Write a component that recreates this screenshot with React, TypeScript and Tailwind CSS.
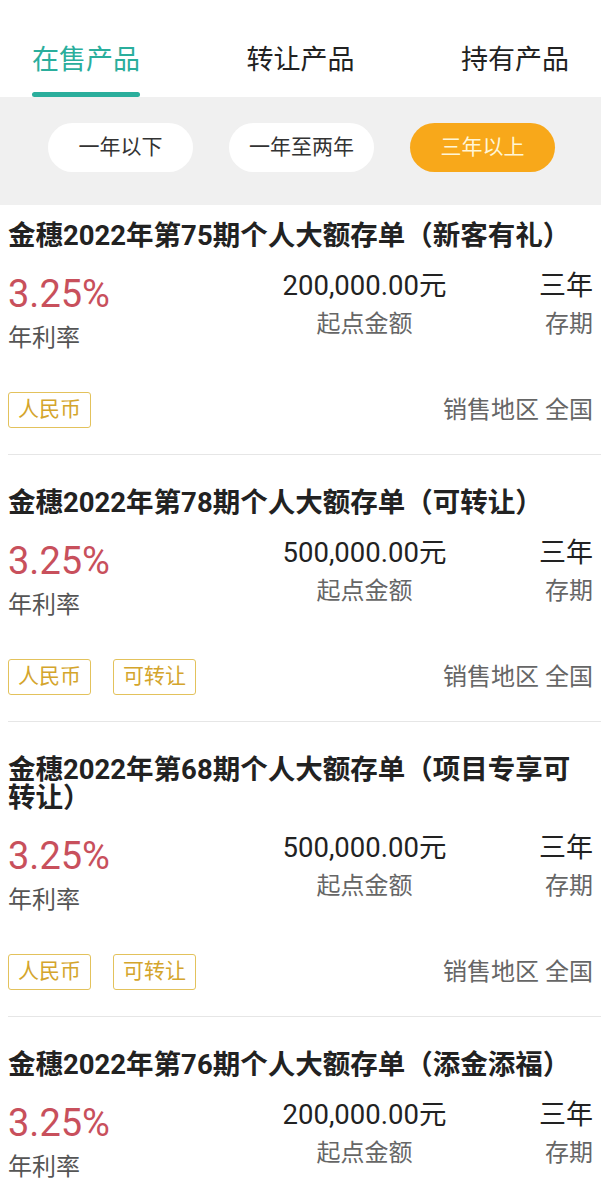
import React from 'react';

type Product = {
  name: string;
  rate: string;
  amount: string;
  term: string;
  tags: string[];
};

const products: Product[] = [
  { name: '金穗2022年第75期个人大额存单（新客有礼）', rate: '3.25%', amount: '200,000.00元', term: '三年', tags: ['人民币'] },
  { name: '金穗2022年第78期个人大额存单（可转让）', rate: '3.25%', amount: '500,000.00元', term: '三年', tags: ['人民币', '可转让'] },
  { name: '金穗2022年第68期个人大额存单（项目专享可转让）', rate: '3.25%', amount: '500,000.00元', term: '三年', tags: ['人民币', '可转让'] },
  { name: '金穗2022年第76期个人大额存单（添金添福）', rate: '3.25%', amount: '200,000.00元', term: '三年', tags: ['人民币'] },
];

const tabs = ['在售产品', '转让产品', '持有产品'];
const filters = ['一年以下', '一年至两年', '三年以上'];

const ProductCard: React.FC<{ p: Product; first: boolean }> = ({ p, first }) => (
  <div className={`ml-[8px] border-b border-[#e6e6e6] pr-[8px] pb-[26px] ${first ? 'pt-[17px]' : 'pt-[34px]'}`}>
    <h4 className="text-[27.5px] leading-[28px] font-bold text-[#222]">{p.name}</h4>

    <div className="mt-[24px] flex items-start">
      <div className="w-[275px]">
        <div className="text-[38px] leading-[40px] text-[#c8505c]">{p.rate}</div>
        <div className="mt-[10px] text-[24px] leading-[28px] text-[#555]">年利率</div>
      </div>
      <div className="w-[163px] -mt-[3px] flex flex-col items-center">
        <div className="text-[27.5px] leading-[30px] text-[#222] whitespace-nowrap">{p.amount}</div>
        <div className="mt-[9px] text-[24px] leading-[28px] text-[#666]">起点金额</div>
      </div>
      <div className="flex-1 -mt-[3px] flex flex-col items-end">
        <div className="text-[27px] leading-[30px] text-[#222]">{p.term}</div>
        <div className="mt-[9px] text-[24px] leading-[28px] text-[#666]">存期</div>
      </div>
    </div>

    <div className="mt-[40px] flex items-center justify-between">
      <div className="flex gap-[22px]">
        {p.tags.map((t) => (
          <span
            key={t}
            className="h-[36px] px-[9px] flex items-center border border-[#e3c25c] rounded-[3px] text-[21px] text-[#d4a52c]"
          >
            {t}
          </span>
        ))}
      </div>
      <div className="text-[24px] leading-[28px] text-[#666]">销售地区 全国</div>
    </div>
  </div>
);

export default function App() {
  return (
    <div className="w-[601px] h-[1184px] overflow-hidden bg-white font-['Roboto','Noto_Sans_CJK_SC',sans-serif]">
      <div className="h-[97px] px-[32px] flex justify-between items-end">
        {tabs.map((t, i) => (
          <div key={t} className="flex flex-col items-center">
            <span className={`text-[27px] leading-[32px] ${i === 0 ? 'text-[#2aae9c]' : 'text-[#222]'}`}>{t}</span>
            <span className={`mt-[16px] h-[5px] w-full rounded-full ${i === 0 ? 'bg-[#2aae9c]' : 'bg-transparent'}`} />
          </div>
        ))}
      </div>

      <div className="bg-[#f0f0f0] pt-[26px] pb-[33px] pl-[48px] flex gap-[36px]">
        {filters.map((f, i) => (
          <button
            key={f}
            className={`w-[145px] h-[49px] rounded-full text-[21px] ${
              i === 2 ? 'bg-[#f8a81a] text-[#fff6d6]' : 'bg-white text-[#333]'
            }`}
          >
            {f}
          </button>
        ))}
      </div>

      {products.map((p, i) => (
        <ProductCard key={p.name} p={p} first={i === 0} />
      ))}
    </div>
  );
}
